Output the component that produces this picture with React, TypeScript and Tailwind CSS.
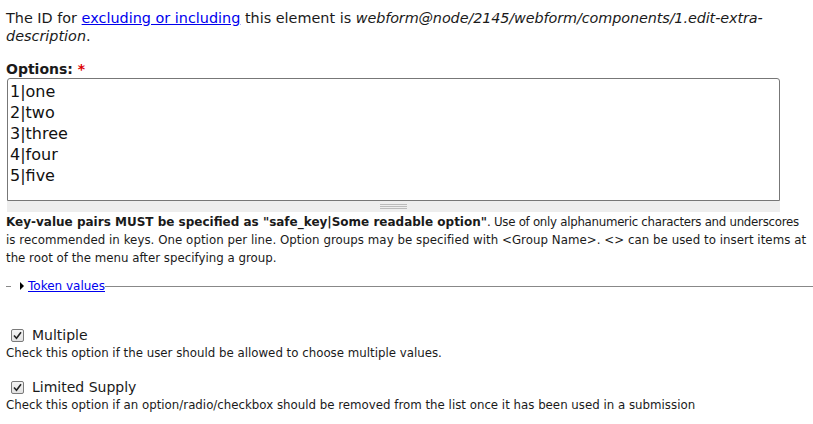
function CheckBox() {
	return (
		<span className="inline-flex w-[13px] h-[13px] border border-[#7a7a7a] rounded-[2px] bg-gradient-to-b from-[#f4f4f4] to-[#e2e2e2] items-center justify-center shrink-0">
			<svg width="9" height="9" viewBox="0 0 9 9">
				<path d="M1 4.5 L3.5 7.2 L8 1.2" fill="none" stroke="#222" strokeWidth="1.6" />
			</svg>
		</span>
	);
}

export default function App() {
	const options = ["1|one", "2|two", "3|three", "4|four", "5|five"];

	return (
		<div className="bg-white text-[#1a1a1a] px-[6px] pt-[9px] pb-[9px] font-['DejaVu_Sans',Verdana,sans-serif] text-[12px] leading-[18px]">
			<div className="text-[14.4px] leading-[18px]">
				<div className="whitespace-nowrap">
					The ID for{" "}
					<a href="#" className="text-[#0000ee] underline">
						excluding or including
					</a>{" "}
					this element is <em className="tracking-[-0.1px]">webform@node/2145/webform/components/1.edit-extra-</em>
				</div>
				<div>
					<em>description</em>.
				</div>
			</div>

			<div className="mt-[16px]">
				<label className="font-bold block text-[14px] leading-[17px]">
					Options: <span className="text-[#dd0000]">*</span>
				</label>
				<div className="ml-[1px] w-[773px]">
					<div className="h-[123px] border border-[#777] rounded-t-[3px] bg-white pl-[2px] pt-[2px] text-[16px] leading-[21px] text-[#111]">
						{options.map((o) => (
							<div key={o}>{o}</div>
						))}
					</div>
					<div className="h-[11px] bg-[#eee] flex items-center justify-center">
						<div className="w-[27px] flex flex-col gap-px">
							<div className="h-px bg-[#bbb]" />
							<div className="h-px bg-[#bbb]" />
							<div className="h-px bg-[#bbb]" />
						</div>
					</div>
				</div>
				<div className="mt-[1px] text-[11.8px] leading-[18px] whitespace-nowrap">
					<div>
						<strong className="text-[12px]">Key-value pairs MUST be specified as "safe_key|Some readable option"</strong>
						<span className="tracking-[-0.28px]">. Use of only alphanumeric characters and underscores</span>
					</div>
					<div className="tracking-[0.04px]">
						is recommended in keys. One option per line. Option groups may be specified with &lt;Group Name&gt;.
						&lt;&gt; can be used to insert items at
					</div>
					<div>the root of the menu after specifying a group.</div>
				</div>
			</div>

			<div className="mt-[10px] flex items-center -mr-[6px]">
				<div className="w-[5px] h-px bg-[#888]" />
				<div className="w-[9px]" />
				<svg width="4" height="8" viewBox="0 0 4 8" className="mr-[4px]">
					<path d="M0 0 L4 4 L0 8 Z" fill="#000" />
				</svg>
				<a href="#" className="text-[#0000ee] underline leading-[18px]">
					Token values
				</a>
				<div className="flex-1 h-px bg-[#888]" />
			</div>

			<div className="mt-[31px]">
				<label className="flex items-center gap-[8px] pl-[5px] text-[14px] leading-[18px]">
					<CheckBox />
					Multiple
				</label>
				<div className="text-[11.8px] leading-[18px]">
					Check this option if the user should be allowed to choose multiple values.
				</div>
			</div>

			<div className="mt-[16px]">
				<label className="flex items-center gap-[8px] pl-[5px] text-[14px] leading-[18px]">
					<CheckBox />
					Limited Supply
				</label>
				<div className="text-[11.8px] leading-[18px]">
					Check this option if an option/radio/checkbox should be removed from the list once it has been used in a
					submission
				</div>
			</div>
		</div>
	);
}
